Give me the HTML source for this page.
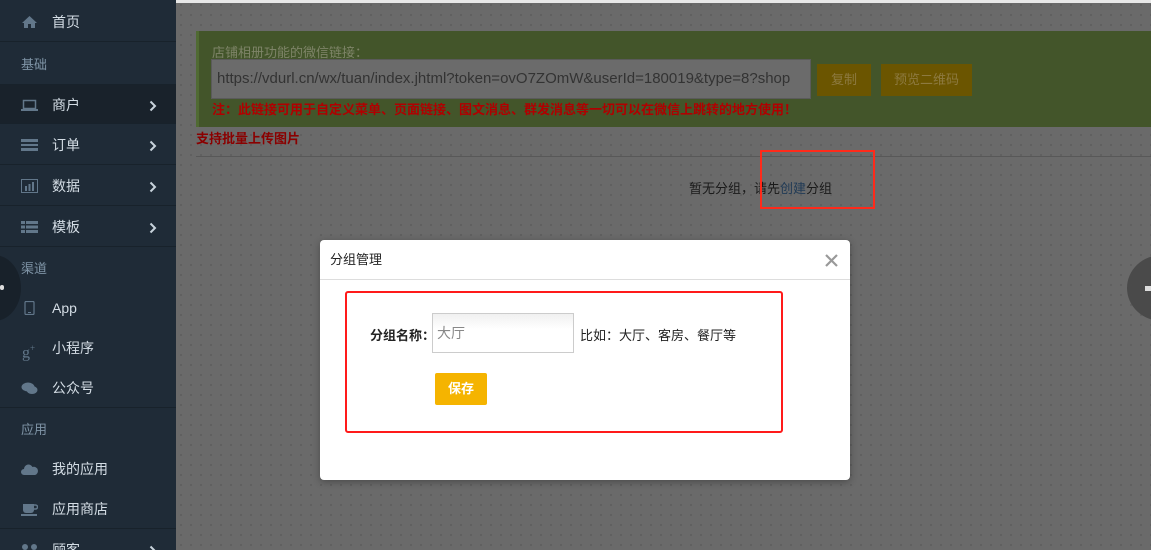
<!DOCTYPE html>
<html><head><meta charset="utf-8"><style>
*{margin:0;padding:0;box-sizing:border-box}
html,body{width:1151px;height:550px;overflow:hidden}
body{position:relative;background:#6a6a6a;font-family:"Liberation Sans","Noto Sans CJK SC",sans-serif;font-size:13px}
.sb{position:absolute;left:0;top:0;width:176px;height:550px;background:#1f2b37;color:#c8d3dc}
.it{position:absolute;left:0;width:176px;height:40px;line-height:40px;border-bottom:1px solid #18222b}
.it svg.ic{position:absolute;left:21px;top:13px}
.it .t{position:absolute;left:52px;font-size:14px;color:#d4dde5}
.it svg.ar{position:absolute;left:149px;top:15px}
.hd{position:absolute;left:21px;color:#7f94a6;font-size:13px}
.main{position:absolute;left:176px;top:0;right:0;bottom:0;background-color:#6a6a6a;background-image:radial-gradient(#5c5c5c 1px,transparent 1px);background-size:10px 10px}
.top{position:absolute;left:176px;top:0;right:0;height:3px;background:#e8e8e8}
</style></head><body>
<div class="main"></div>
<div class="top"></div>
<div class="sb">
 <div class="it" style="top:2px"><svg class="ic" width="17" height="14" viewBox="0 0 17 14"><path d="M8.5 1L1 8h2v5h4V9h3v4h4V8h2z" fill="#62778a"/></svg><span class="t">首页</span></div>
 <div class="hd" style="top:54px">基础</div>
 <div class="it" style="top:84px;background:#19222b;border-top:1px solid #18222b"><svg class="ic" width="17" height="14" viewBox="0 0 17 14"><rect x="2.5" y="2.5" width="12" height="8" fill="none" stroke="#62778a" stroke-width="1.5"/><rect x="0" y="11" width="17" height="2" fill="#62778a"/></svg><span class="t">商户</span><svg class="ar" width="8" height="12" viewBox="0 0 8 12"><path d="M1.5 1.5L6 6l-4.5 4.5" fill="none" stroke="#c8d3dc" stroke-width="2"/></svg></div>
 <div class="it" style="top:125px"><svg class="ic" width="17" height="14" viewBox="0 0 17 14"><rect y="1" width="17" height="3" fill="#62778a"/><rect y="6" width="17" height="2" fill="#62778a"/><rect y="10" width="17" height="3" fill="#62778a"/></svg><span class="t">订单</span><svg class="ar" width="8" height="12" viewBox="0 0 8 12"><path d="M1.5 1.5L6 6l-4.5 4.5" fill="none" stroke="#c8d3dc" stroke-width="2"/></svg></div>
 <div class="it" style="top:166px"><svg class="ic" width="17" height="14" viewBox="0 0 17 14"><rect x=".5" y=".5" width="16" height="13" fill="none" stroke="#62778a"/><rect x="4" y="7" width="2" height="5" fill="#62778a"/><rect x="7.5" y="5" width="2" height="7" fill="#62778a"/><rect x="11" y="3" width="2" height="9" fill="#62778a"/></svg><span class="t">数据</span><svg class="ar" width="8" height="12" viewBox="0 0 8 12"><path d="M1.5 1.5L6 6l-4.5 4.5" fill="none" stroke="#c8d3dc" stroke-width="2"/></svg></div>
 <div class="it" style="top:207px"><svg class="ic" width="17" height="14" viewBox="0 0 17 14"><rect y="1" width="4" height="3" fill="#62778a"/><rect x="5" y="1" width="12" height="3" fill="#62778a"/><rect y="5.5" width="4" height="3" fill="#62778a"/><rect x="5" y="5.5" width="12" height="3" fill="#62778a"/><rect y="10" width="4" height="3" fill="#62778a"/><rect x="5" y="10" width="12" height="3" fill="#62778a"/></svg><span class="t">模板</span><svg class="ar" width="8" height="12" viewBox="0 0 8 12"><path d="M1.5 1.5L6 6l-4.5 4.5" fill="none" stroke="#c8d3dc" stroke-width="2"/></svg></div>
 <div class="hd" style="top:258px">渠道</div>
 <div class="it" style="top:288px;border:none"><svg class="ic" width="17" height="14" viewBox="0 0 17 14"><rect x="4" y=".5" width="9" height="13" rx="1" fill="none" stroke="#62778a" stroke-width="1.2"/><rect x="7" y="11" width="3" height="1" fill="#62778a"/></svg><span class="t">App</span></div>
 <div class="it" style="top:328px;border:none"><span style="position:absolute;left:22px;top:0;color:#62778a;font-family:'Liberation Serif',serif;font-size:16px">g<sup style="font-size:9px">+</sup></span><span class="t">小程序</span></div>
 <div class="it" style="top:368px"><svg class="ic" width="17" height="14" viewBox="0 0 17 14"><ellipse cx="7" cy="6" rx="6.5" ry="4.5" fill="#62778a"/><ellipse cx="11" cy="9" rx="5.5" ry="4" fill="#62778a"/></svg><span class="t">公众号</span></div>
 <div class="hd" style="top:419px">应用</div>
 <div class="it" style="top:449px;border:none"><svg class="ic" width="17" height="14" viewBox="0 0 17 14"><path d="M3 13a3 3 0 010-6 4.5 4.5 0 018.5-2A3.5 3.5 0 0114 13z" fill="#62778a"/></svg><span class="t">我的应用</span></div>
 <div class="it" style="top:489px"><svg class="ic" width="17" height="14" viewBox="0 0 17 14"><path d="M2 2h11v6a3 3 0 01-3 3H5a3 3 0 01-3-3z" fill="#62778a"/><path d="M13 3h1.5a2 2 0 010 4H13" fill="none" stroke="#62778a" stroke-width="1.5"/><rect y="12" width="16" height="2" fill="#62778a"/></svg><span class="t">应用商店</span></div>
 <div class="it" style="top:530px;border:none"><svg class="ic" width="17" height="14" viewBox="0 0 17 14"><circle cx="4" cy="4" r="3" fill="#62778a"/><circle cx="13" cy="4" r="3" fill="#62778a"/><rect x="1" y="7" width="15" height="7" fill="#62778a"/></svg><span class="t">顾客</span><svg class="ar" width="8" height="12" viewBox="0 0 8 12"><path d="M1.5 1.5L6 6l-4.5 4.5" fill="none" stroke="#c8d3dc" stroke-width="2"/></svg></div>
 <div style="position:absolute;left:-33px;top:255px;width:54px;height:66px;border-radius:50%;background:#18212a"></div>
 <div style="position:absolute;left:0;top:285px;width:4px;height:5px;background:#ddd;border-radius:2px"></div>
</div>
<div style="position:absolute;left:1127px;top:255px;width:70px;height:66px;border-radius:50%;background:#4a4a4a"></div>
<div style="position:absolute;left:1145px;top:286px;width:6px;height:5px;background:#ddd"></div>
<div style="position:absolute;left:196px;top:31px;width:955px;height:96px;background:#43552a;border-left:3px solid #506a33"></div>
<div style="position:absolute;left:212px;top:42px;color:#7e8468;font-size:13px">店铺相册功能的微信链接：</div>
<div style="position:absolute;left:211px;top:59px;width:600px;height:40px;background:#6b6b6b;border:1px solid #5a5a5a;color:#333;font-size:15px;line-height:38px;padding-left:5px;white-space:nowrap;overflow:hidden">https://vdurl.cn/wx/tuan/index.jhtml?token=ovO7ZOmW&amp;userId=180019&amp;type=8?shop</div>
<div style="position:absolute;left:817px;top:64px;width:54px;height:32px;background:#6b5500;color:#8d7a40;text-align:center;line-height:32px">复制</div>
<div style="position:absolute;left:881px;top:64px;width:91px;height:32px;background:#6b5500;color:#8d7a40;text-align:center;line-height:32px">预览二维码</div>
<div style="position:absolute;left:212px;top:99px;color:#b00000;font-weight:bold;font-size:13px">注：此链接可用于自定义菜单、页面链接、图文消息、群发消息等一切可以在微信上跳转的地方使用！</div>
<div style="position:absolute;left:196px;top:128px;color:#8a0000;font-weight:bold;font-size:13px">支持批量上传图片</div>
<div style="position:absolute;left:196px;top:156px;width:955px;height:1px;background:#585858"></div>
<div style="position:absolute;left:689px;top:178px;color:#1a1a1a;font-size:13px">暂无分组，请先<span style="color:#203a55">创建</span>分组</div>
<div style="position:absolute;left:760px;top:150px;width:115px;height:59px;border:2px solid #ff2a1a"></div>
<div style="position:absolute;left:320px;top:240px;width:530px;height:240px;background:#fff;border-radius:4px;box-shadow:0 2px 8px rgba(0,0,0,.3)">
 <div style="height:40px;border-bottom:1px solid #ddd;line-height:40px;padding-left:10px;color:#222;font-size:13px">分组管理</div>
 <svg style="position:absolute;right:12px;top:14px" width="13" height="13" viewBox="0 0 13 13"><path d="M1 1l11 11M12 1L1 12" stroke="#999" stroke-width="2.2"/></svg>
 <div style="position:absolute;left:25px;top:51px;width:438px;height:142px;border:2px solid #ff1a1a;border-radius:3px"></div>
 <div style="position:absolute;left:50px;top:85px;font-weight:bold;color:#222;font-size:13px">分组名称：</div>
 <div style="position:absolute;left:112px;top:73px;width:142px;height:40px;border:1px solid #ccc;background:linear-gradient(#f0f0f0,#fff 40%);color:#888;font-size:14px;line-height:38px;padding-left:4px">大厅</div>
 <div style="position:absolute;left:260px;top:85px;color:#222;font-size:13px">比如：大厅、客房、餐厅等</div>
 <div style="position:absolute;left:115px;top:133px;width:52px;height:32px;background:#f5b400;border-radius:2px;color:#fff;font-weight:bold;text-align:center;line-height:32px">保存</div>
</div>
</body></html>
